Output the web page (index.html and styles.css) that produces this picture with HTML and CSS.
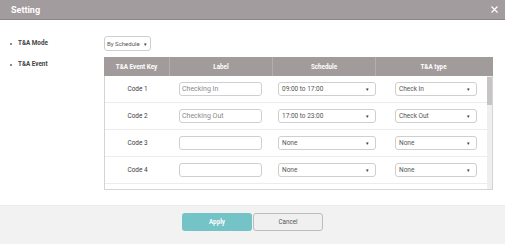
FILE: index.html
```html
<!DOCTYPE html>
<html>
<head>
	<meta charset="utf-8">
	<title>Setting</title>
	<link rel="stylesheet" href="styles.css">
</head>
<body>
	<div class="titlebar">
		<span class="title">Setting</span>
		<svg class="close" width="7" height="7" viewBox="0 0 7 7">
			<path d="M0.5 0.5 L6.5 6.5 M6.5 0.5 L0.5 6.5" stroke="#fff" stroke-width="1.2"/>
		</svg>
	</div>

	<div class="form">
		<div class="field">T&amp;A Mode</div>
		<div>
			<div class="select mode">By Schedule <span class="arrow">&#9662;</span></div>
		</div>

		<div class="field">T&amp;A Event</div>
		<div class="grid">
			<div class="grid-head">
				<div>T&amp;A Event Key</div>
				<div>Label</div>
				<div>Schedule</div>
				<div>T&amp;A type</div>
			</div>
			<div class="grid-body">
				<div class="rows">
					<div class="row">
						<div class="key">Code 1</div>
						<div class="c-label"><div class="input">Checking In</div></div>
						<div class="c-sched"><div class="select sched">09:00 to 17:00 <span class="arrow">&#9662;</span></div></div>
						<div class="c-type"><div class="select type">Check In <span class="arrow">&#9662;</span></div></div>
					</div>
					<div class="row">
						<div class="key">Code 2</div>
						<div class="c-label"><div class="input">Checking Out</div></div>
						<div class="c-sched"><div class="select sched">17:00 to 23:00 <span class="arrow">&#9662;</span></div></div>
						<div class="c-type"><div class="select type">Check Out <span class="arrow">&#9662;</span></div></div>
					</div>
					<div class="row">
						<div class="key">Code 3</div>
						<div class="c-label"><div class="input"></div></div>
						<div class="c-sched"><div class="select sched">None <span class="arrow">&#9662;</span></div></div>
						<div class="c-type"><div class="select type">None <span class="arrow">&#9662;</span></div></div>
					</div>
					<div class="row">
						<div class="key">Code 4</div>
						<div class="c-label"><div class="input"></div></div>
						<div class="c-sched"><div class="select sched">None <span class="arrow">&#9662;</span></div></div>
						<div class="c-type"><div class="select type">None <span class="arrow">&#9662;</span></div></div>
					</div>
				</div>
				<div class="scrollbar"><div class="thumb"></div></div>
			</div>
		</div>
	</div>

	<div class="footer">
		<div class="btn apply">Apply</div>
		<div class="btn cancel">Cancel</div>
	</div>
</body>
</html>
```

FILE: styles.css
```css
html, body {
	margin: 0;
	background: #fff;
	font-family: Roboto, 'Liberation Sans', sans-serif;
	overflow: hidden;
}
.titlebar {
	height: 19px;
	background: #a39c9e;
	border-bottom: 1px solid #8c8688;
	display: flex;
	align-items: center;
	justify-content: space-between;
	padding: 0 7px 0 11px;
}
.title {
	color: #fff;
	font-weight: bold;
	font-size: 9px;
}
.close {
	display: block;
}
.form {
	display: grid;
	grid-template-columns: 104px 389px;
	row-gap: 6px;
	padding-top: 16px;
}
.field {
	position: relative;
	padding-left: 18px;
	font-size: 6.3px;
	font-weight: bold;
	color: #444;
	line-height: 15px;
}
.field::before {
	content: "";
	position: absolute;
	left: 10px;
	top: 7px;
	width: 2px;
	height: 2px;
	border-radius: 1px;
	background: #666;
}
.select, .input {
	box-sizing: border-box;
	border: 1px solid #cfcfcf;
	border-radius: 3px;
	background: #fff;
	font-size: 6.5px;
	color: #555;
	display: flex;
	align-items: center;
	justify-content: space-between;
	padding: 0 6px 0 3px;
}
.arrow {
	font-size: 5px;
	color: #333;
}
.select.mode {
	width: 47px;
	height: 15px;
	padding: 0 3px 0 2px;
	font-size: 6px;
}
.grid {
	border: 1px solid #d4d4d4;
	border-top: none;
}
.grid-head {
	display: grid;
	grid-template-columns: 65px 103px 103px 116px;
	height: 19px;
	background: #a29b9b;
	margin-left: -1px;
	margin-right: -1px;
}
.grid-head div {
	color: #fff;
	font-weight: bold;
	font-size: 6.3px;
	display: flex;
	align-items: center;
	justify-content: center;
	border-left: 1px solid #b4aeae;
}
.grid-head div:first-child {
	border-left: none;
}
.grid-body {
	display: flex;
	height: 113px;
	overflow: hidden;
}
.rows {
	width: 382px;
}
.row {
	display: grid;
	grid-template-columns: 65px 103px 103px 111px;
	height: 26px;
	border-bottom: 1px solid #ececec;
	align-items: center;
}
.key {
	text-align: center;
	font-size: 6.4px;
	color: #3a3a3a;
}
.input {
	width: 83px;
	height: 14px;
	margin-left: 9px;
	color: #8a8a8a;
	font-size: 7px;
	padding-left: 2px;
}
.select.sched {
	width: 98px;
	height: 14px;
	margin-left: 5px;
}
.select.type {
	width: 82px;
	height: 14px;
	margin-left: 19px;
}
.scrollbar {
	width: 5px;
	background: #efefef;
}
.thumb {
	height: 28px;
	margin-top: 1px;
	background: #c7c4c4;
}
.footer {
	margin-top: 15px;
	height: 39px;
	background: #f2f2f2;
	border-top: 1px solid #ebebeb;
	display: flex;
	justify-content: center;
	align-items: flex-start;
	gap: 1px;
	padding-top: 7px;
	box-sizing: border-box;
}
.btn {
	box-sizing: border-box;
	width: 70px;
	height: 18px;
	border-radius: 3px;
	font-size: 6.3px;
	display: flex;
	align-items: center;
	justify-content: center;
}
.apply {
	background: #74c3c6;
	color: #fff;
	font-weight: bold;
}
.cancel {
	background: #f0f0f0;
	border: 1px solid #bdbdbd;
	color: #555;
}
```
